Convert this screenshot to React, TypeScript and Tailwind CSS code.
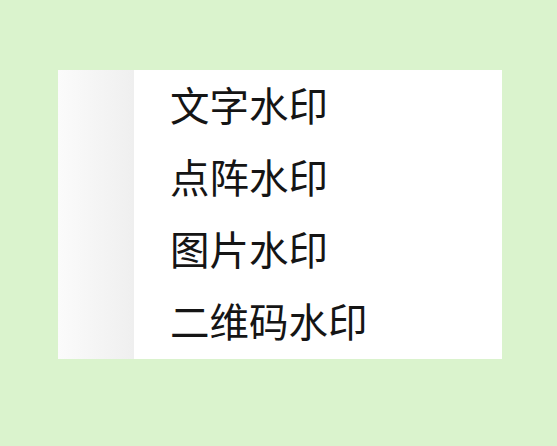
const items = ['文字水印', '点阵水印', '图片水印', '二维码水印'];

export default function App() {
  return (
    <div className="w-[557px] h-[446px] bg-[#daf3cd] pt-[70px] pl-[58px]">
      <div className="w-[444px] h-[289px] bg-white flex">
        <div className="w-[76px] h-full bg-gradient-to-r from-[#fbfbfb] to-[#efefef]" />
        <ul className="flex-1">
          {items.map((label) => (
            <li
              key={label}
              className="h-[72px] flex items-center pl-[36px] pb-[5px] text-[39.5px] leading-none text-[#151515] font-['Noto_Sans_CJK_SC',sans-serif]"
            >
              {label}
            </li>
          ))}
        </ul>
      </div>
    </div>
  );
}
